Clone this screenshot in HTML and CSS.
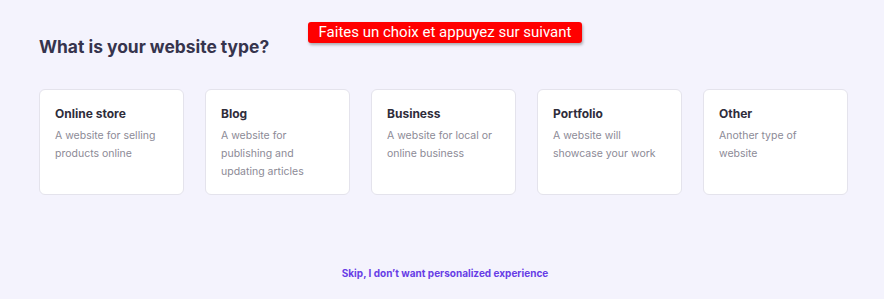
FILE: index.html
```html
<!DOCTYPE html>
<html lang="en">
<head>
  <meta charset="UTF-8">
  <title>Website type</title>
  <link rel="stylesheet" href="styles.css">
</head>
<body>
  <div class="hint">Faites un choix et appuyez sur suivant</div>
  <div class="page">
    <h1>What is your website type?</h1>
    <div class="card-row">
      <div class="card">
        <h2>Online store</h2>
        <p>A website for selling products online</p>
      </div>
      <div class="card">
        <h2>Blog</h2>
        <p>A website for publishing and updating articles</p>
      </div>
      <div class="card">
        <h2>Business</h2>
        <p>A website for local or online business</p>
      </div>
      <div class="card">
        <h2>Portfolio</h2>
        <p>A website will showcase your work</p>
      </div>
      <div class="card">
        <h2>Other</h2>
        <p>Another type of website</p>
      </div>
    </div>
    <a class="skip" href="#">Skip, I don’t want personalized experience</a>
  </div>
</body>
</html>
```

FILE: styles.css
```css
body {
  margin: 0;
  background-color: #f4f3fd;
  font-family: Inter, "Noto Sans", sans-serif;
  color: #36344d;
  height: 299px;
  overflow: hidden;
}

.hint {
  position: absolute;
  left: 308px;
  top: 22px;
  width: 274px;
  height: 21px;
  box-sizing: border-box;
  background-color: #ff0000;
  color: white;
  font-family: Roboto, sans-serif;
  font-size: 15px;
  line-height: 21px;
  text-align: center;
  border-radius: 3px;
  box-shadow: 1px 2px 3px rgba(0,0,0,0.3);
}

.page {
  display: flex;
  flex-direction: column;
  padding: 36px 36px 0 39px;
}

h1 {
  margin: 0 0 32px 0;
  font-size: 17.4px;
  line-height: 21px;
  font-weight: 700;
  color: #36344d;
}

.card-row {
  display: flex;
  gap: 21px;
}

.card {
  width: 145px;
  height: 106px;
  box-sizing: border-box;
  background-color: white;
  border: 1px solid #e4e3ec;
  border-radius: 6px;
  padding: 16px 15px 0 15px;
}

.card h2 {
  margin: 0 0 5px 0;
  font-size: 12px;
  line-height: 16px;
  font-weight: 650;
  color: #2f2d3b;
}

.card p {
  margin: 0;
  font-size: 10.5px;
  line-height: 18px;
  color: #8c8a96;
}

.skip {
  align-self: center;
  margin-top: 72px;
  margin-right: -3px;
  font-size: 10px;
  font-weight: 700;
  color: #673de6;
  text-decoration: none;
}
```
